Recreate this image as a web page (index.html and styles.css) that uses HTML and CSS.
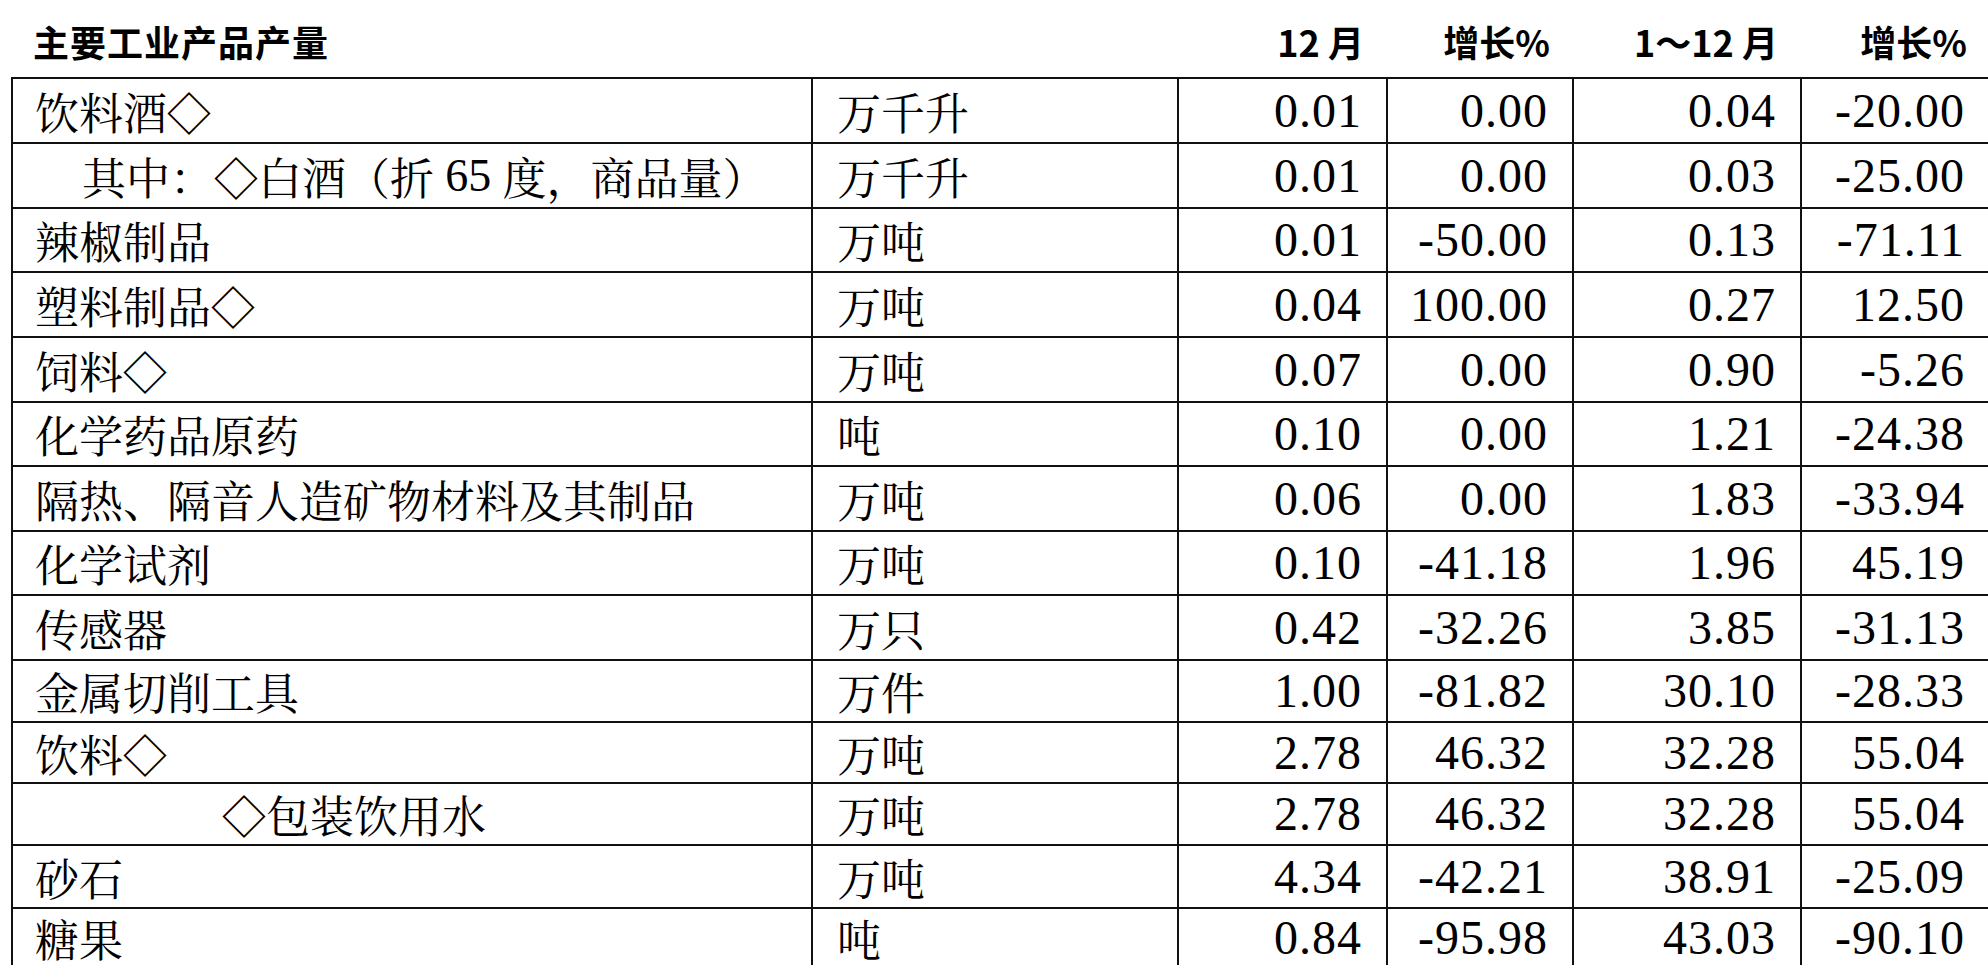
FILE: index.html
```html
<!DOCTYPE html>
<html>
<head>
<meta charset="utf-8">
<link rel="stylesheet" href="styles.css">
</head>
<body>
<section class="sheet">
  <p class="hd name">主要工业产品产量</p>
  <p class="hd"></p>
  <p class="hd num">12 月</p>
  <p class="hd num">增长%</p>
  <p class="hd num">1～12 月</p>
  <p class="hd num">增长%</p>

  <p class="c name top">饮料酒◇</p>
  <p class="c unit top">万千升</p>
  <p class="c num top">0.01</p>
  <p class="c num top">0.00</p>
  <p class="c num top">0.04</p>
  <p class="c num top">-20.00</p>

  <p class="c name in1">其中：◇白酒（折 <span class="lat">65</span> 度，商品量）</p>
  <p class="c unit">万千升</p>
  <p class="c num">0.01</p>
  <p class="c num">0.00</p>
  <p class="c num">0.03</p>
  <p class="c num">-25.00</p>

  <p class="c name">辣椒制品</p>
  <p class="c unit">万吨</p>
  <p class="c num">0.01</p>
  <p class="c num">-50.00</p>
  <p class="c num">0.13</p>
  <p class="c num">-71.11</p>

  <p class="c name">塑料制品◇</p>
  <p class="c unit">万吨</p>
  <p class="c num">0.04</p>
  <p class="c num">100.00</p>
  <p class="c num">0.27</p>
  <p class="c num">12.50</p>

  <p class="c name">饲料◇</p>
  <p class="c unit">万吨</p>
  <p class="c num">0.07</p>
  <p class="c num">0.00</p>
  <p class="c num">0.90</p>
  <p class="c num">-5.26</p>

  <p class="c name">化学药品原药</p>
  <p class="c unit">吨</p>
  <p class="c num">0.10</p>
  <p class="c num">0.00</p>
  <p class="c num">1.21</p>
  <p class="c num">-24.38</p>

  <p class="c name">隔热、隔音人造矿物材料及其制品</p>
  <p class="c unit">万吨</p>
  <p class="c num">0.06</p>
  <p class="c num">0.00</p>
  <p class="c num">1.83</p>
  <p class="c num">-33.94</p>

  <p class="c name">化学试剂</p>
  <p class="c unit">万吨</p>
  <p class="c num">0.10</p>
  <p class="c num">-41.18</p>
  <p class="c num">1.96</p>
  <p class="c num">45.19</p>

  <p class="c name">传感器</p>
  <p class="c unit">万只</p>
  <p class="c num">0.42</p>
  <p class="c num">-32.26</p>
  <p class="c num">3.85</p>
  <p class="c num">-31.13</p>

  <p class="c name">金属切削工具</p>
  <p class="c unit">万件</p>
  <p class="c num">1.00</p>
  <p class="c num">-81.82</p>
  <p class="c num">30.10</p>
  <p class="c num">-28.33</p>

  <p class="c name">饮料◇</p>
  <p class="c unit">万吨</p>
  <p class="c num">2.78</p>
  <p class="c num">46.32</p>
  <p class="c num">32.28</p>
  <p class="c num">55.04</p>

  <p class="c name in4">◇包装饮用水</p>
  <p class="c unit">万吨</p>
  <p class="c num">2.78</p>
  <p class="c num">46.32</p>
  <p class="c num">32.28</p>
  <p class="c num">55.04</p>

  <p class="c name">砂石</p>
  <p class="c unit">万吨</p>
  <p class="c num">4.34</p>
  <p class="c num">-42.21</p>
  <p class="c num">38.91</p>
  <p class="c num">-25.09</p>

  <p class="c name last">糖果</p>
  <p class="c unit last">吨</p>
  <p class="c num last">0.84</p>
  <p class="c num last">-95.98</p>
  <p class="c num last">43.03</p>
  <p class="c num last">-90.10</p>
</section>
</body>
</html>
```

FILE: styles.css
```css
html, body {
  margin: 0;
  padding: 0;
  background: #ffffff;
  overflow: hidden;
}

body {
  color: #000000;
  font-size: 44px;
  font-family: "Noto Serif CJK SC", serif;
}

.sheet {
  margin-left: 11px;
  display: grid;
  grid-template-columns: 802px 366px 209px 186px 228px 189px;
  grid-template-rows: 77px 67px 65px 64px 65px 65px 64px 65px 64px 65px 62px 61px 62px 63px 56px;
  width: 1980px;
}

.hd {
  margin: 0;
  display: flex;
  align-items: center;
  box-sizing: border-box;
  padding: 5px 24px 0 22px;
  font-family: "Noto Sans CJK SC", sans-serif;
  font-weight: 700;
  font-size: 36px;
  letter-spacing: 1px;
  line-height: 1;
  white-space: nowrap;
}

.hd.num {
  justify-content: flex-end;
  letter-spacing: 0;
}

.c {
  margin: 0;
  display: flex;
  align-items: center;
  box-sizing: border-box;
  border-right: 2px solid #111111;
  border-bottom: 2px solid #111111;
  font-family: "Noto Serif CJK SC", serif;
  font-size: 44px;
  line-height: 1;
  white-space: pre;
  padding: 0 24px 0 22px;
}

.c.top {
  border-top: 2px solid #111111;
}

.c.last {
  border-bottom: none;
  padding-top: 2px;
}

.c.name {
  border-left: 2px solid #111111;
}

.c.unit {
  padding-left: 24px;
}

.c.num {
  justify-content: flex-end;
  font-family: "Liberation Serif", serif;
  font-size: 48px;
  letter-spacing: 1px;
  padding-right: 24px;
}

.lat {
  font-family: "Liberation Serif", serif;
  font-size: 46px;
}

.c.in1 {
  padding-left: 69px;
}

.c.in4 {
  padding-left: 209px;
}
```
